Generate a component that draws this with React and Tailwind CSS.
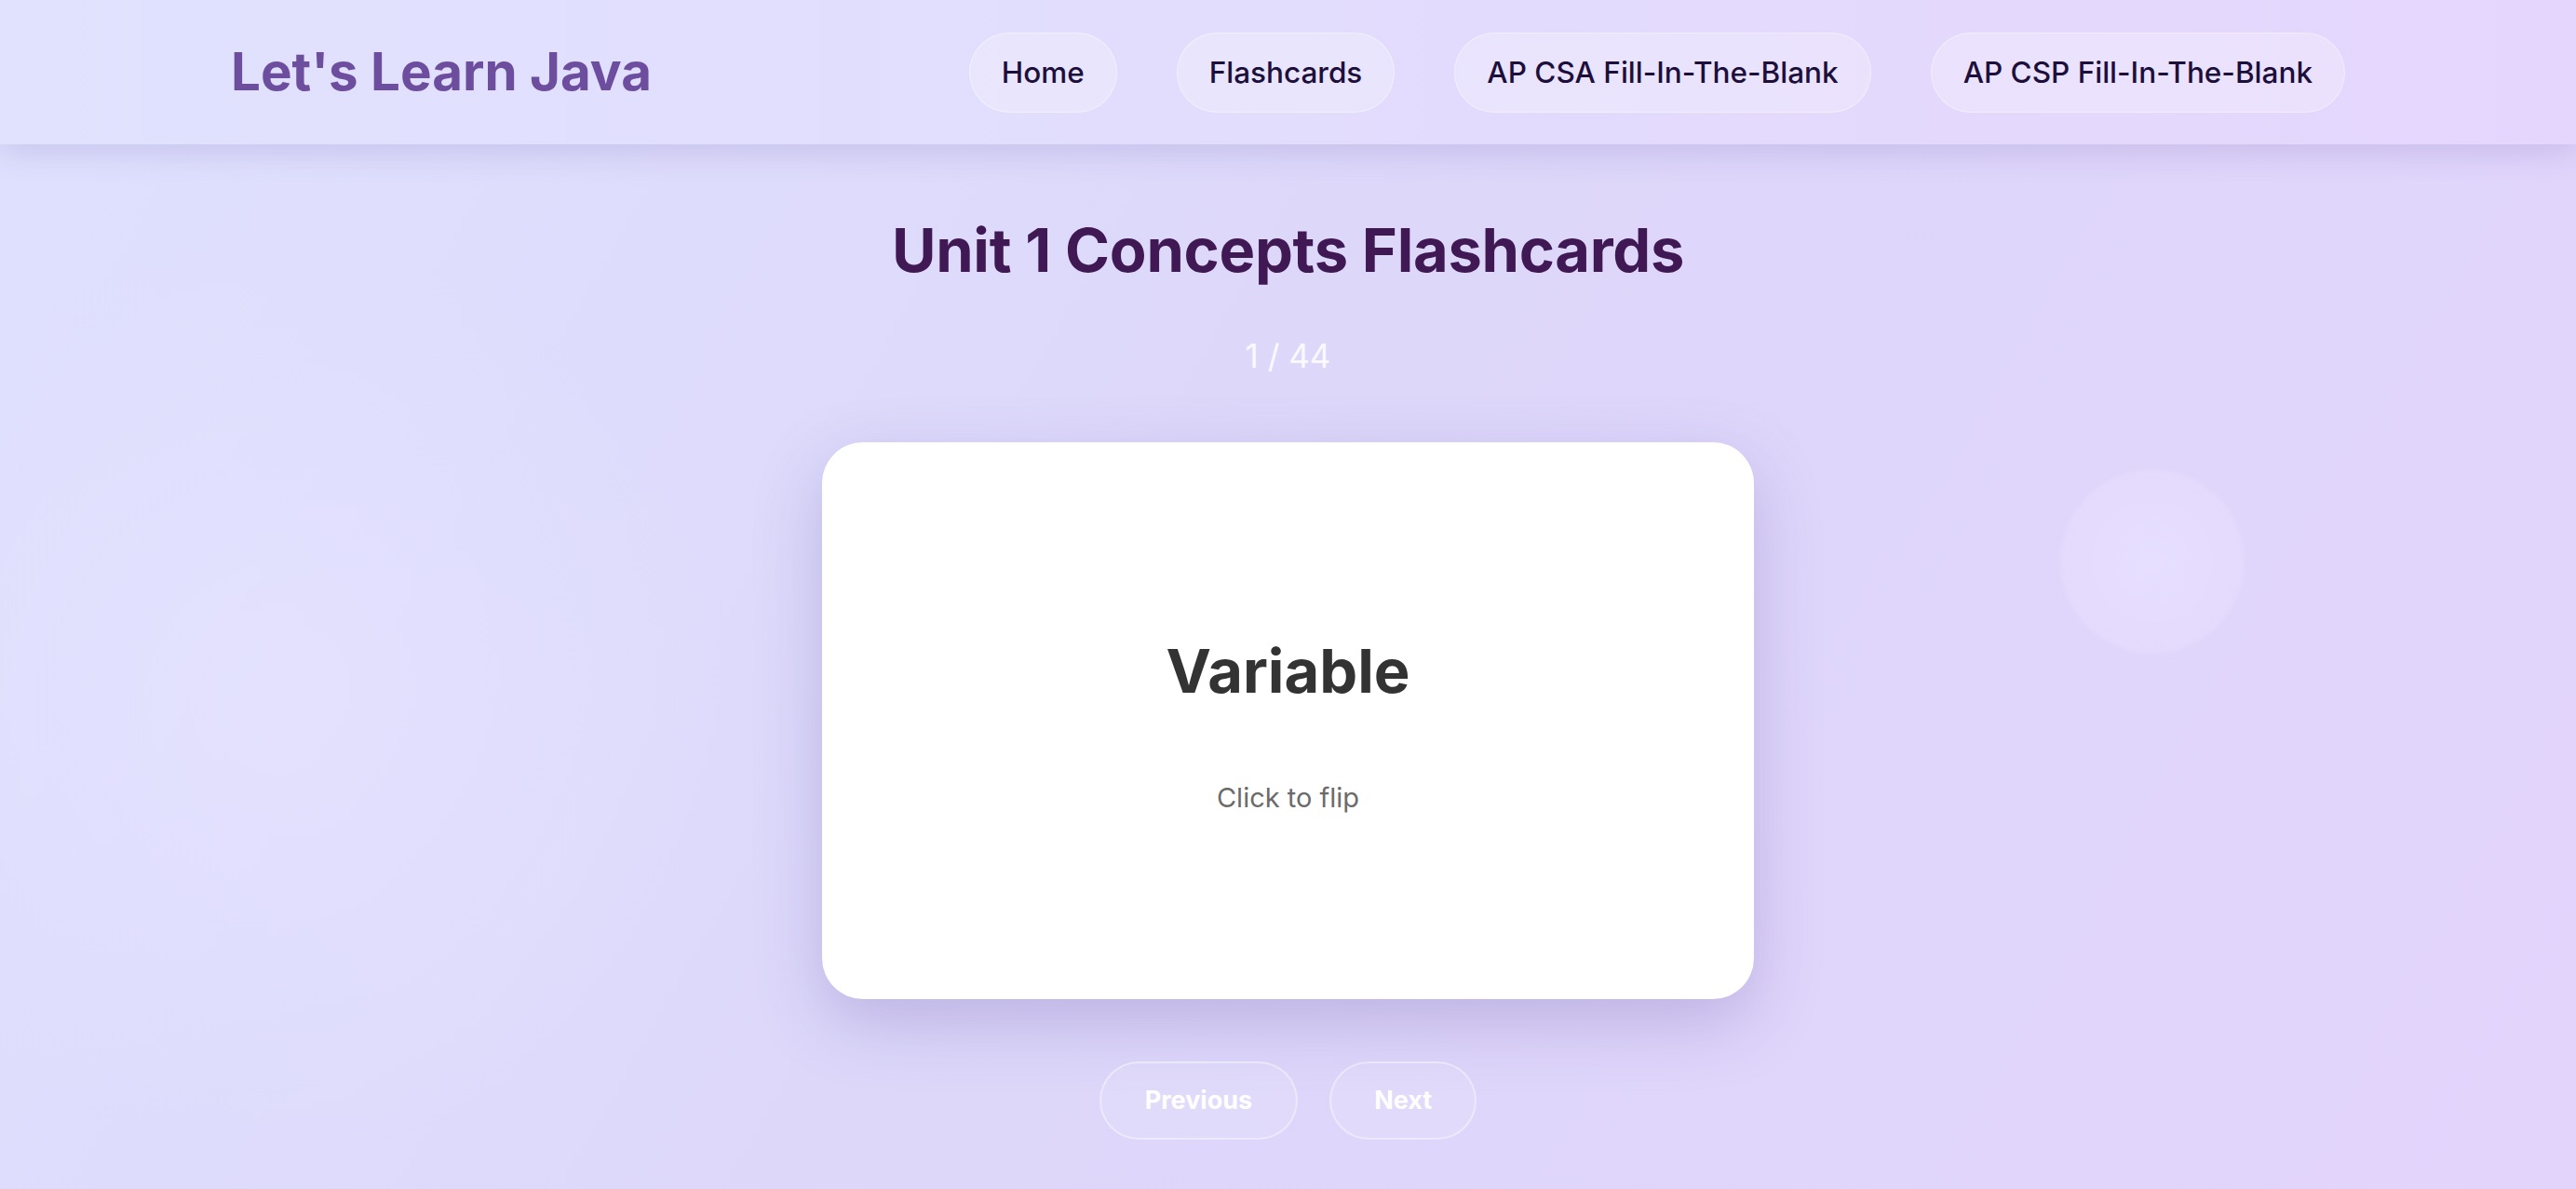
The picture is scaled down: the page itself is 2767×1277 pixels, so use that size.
import React from "react";

export default function App() {
  const navItems = ["Home", "Flashcards", "AP CSA Fill-In-The-Blank", "AP CSP Fill-In-The-Blank"];
  return (
    <div
      className="relative min-h-[1277px] w-full overflow-hidden bg-[linear-gradient(120deg,#dfe1fe_0%,#ddd7fa_50%,#e3d4fc_100%)]"
      style={{ fontFamily: "Inter, 'Noto Sans', sans-serif" }}
    >
      {/* decorative soft glows */}
      <div className="pointer-events-none absolute left-[-200px] top-[250px] h-[1000px] w-[1000px] rounded-full bg-[radial-gradient(circle,rgba(230,228,255,0.6)_0%,rgba(220,218,250,0)_70%)]" />
      <div className="pointer-events-none absolute left-[2213px] top-[504px] h-[198px] w-[198px] rounded-full bg-[radial-gradient(circle,rgba(232,224,255,0.9)_0%,rgba(229,220,253,0.75)_70%,rgba(225,215,252,0)_100%)] blur-[2px]" />

      <header className="relative z-10 flex h-[155px] items-center justify-between bg-[linear-gradient(90deg,#e0e2fe_0%,#e2dcfd_50%,#e5d6fd_100%)] px-[248px] shadow-[0_10px_30px_rgba(90,70,160,0.16)]">
        <div className="text-[56.5px] font-bold leading-none text-[#6d4d9e]">Let's Learn Java</div>
        <nav className="flex items-center gap-[64px]">
          {navItems.map((n) => (
            <a
              key={n}
              className="rounded-full border-[1.5px] border-white/40 bg-white/25 px-[34px] py-[19px] text-[31.5px] font-medium leading-[46px] text-[#1c0f3c]"
            >
              {n}
            </a>
          ))}
        </nav>
      </header>

      <main className="relative z-10 flex flex-col items-center">
        <h1 className="mt-[74px] text-[65px] font-bold leading-[80px] tracking-[-0.3px] text-[#3f1854]">
          Unit 1 Concepts Flashcards
        </h1>
        <div className="mt-[47px] text-[35px] font-normal leading-[52px] text-white/85">1 / 44</div>

        <div className="mt-[67px] flex h-[598px] w-[1001px] flex-col items-center justify-center rounded-[44px] bg-white pt-[12px] shadow-[0_25px_70px_rgba(90,70,160,0.25)]">
          <div className="text-[65px] font-bold leading-[78px] text-[#333333]">Variable</div>
          <div className="mt-[76px] text-[29px] leading-[42px] text-[#6b6b6b]">Click to flip</div>
        </div>

        <div className="mt-[67px] flex items-center gap-[34px]">
          <button className="rounded-full border-[2px] border-white/40 bg-white/10 px-[47px] py-[19px] text-[27px] font-bold leading-[42px] text-white">
            Previous
          </button>
          <button className="rounded-full border-[2px] border-white/40 bg-white/10 px-[46px] py-[19px] text-[27px] font-bold leading-[42px] text-white">
            Next
          </button>
        </div>
      </main>
    </div>
  );
}
